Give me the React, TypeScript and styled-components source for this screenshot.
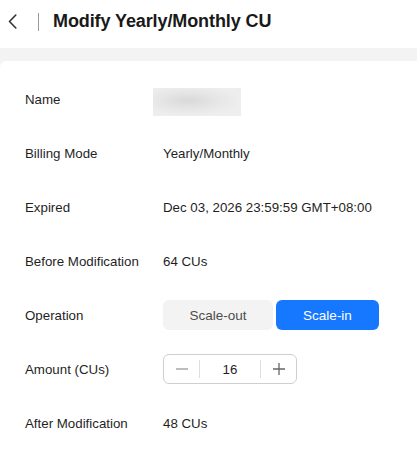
import React from "react";
import styled, { createGlobalStyle } from "styled-components";

const GlobalStyle = createGlobalStyle`
  html, body { margin: 0; padding: 0; }
  body {
    background: #f3f3f3;
    font-family: "Liberation Sans", Arial, sans-serif;
    color: #1f1f1f;
  }
  * { box-sizing: border-box; }
`;

const Page = styled.div`
  min-height: 100vh;
  display: flex;
  flex-direction: column;
  background: #f3f3f3;
`;

const Header = styled.header`
  height: 48px;
  padding: 0 0 6px 7px;
  background: #ffffff;
  display: flex;
  align-items: center;
`;

const BackButton = styled.button`
  width: 10px;
  height: 16px;
  padding: 0;
  border: none;
  background: transparent;
  display: flex;
  align-items: center;
  justify-content: center;
  cursor: pointer;
`;

const Divider = styled.span`
  width: 1px;
  height: 18px;
  background: #9a9a9a;
  margin: 1px 14px 0 21px;
`;

const Title = styled.h1`
  margin: 0;
  font-size: 18px;
  font-weight: 700;
  color: #191919;
  letter-spacing: -0.1px;
`;

const Card = styled.main`
  margin-top: 13px;
  flex: 1;
  background: #ffffff;
  border-radius: 6px 0 0 0;
  padding: 11px 0 0 25px;
  display: flex;
  flex-direction: column;
`;

const Row = styled.div`
  height: 54px;
  display: flex;
  align-items: center;
  font-size: 13.3px;
`;

const Label = styled.div`
  width: 138px;
  flex-shrink: 0;
  color: #1f1f1f;
`;

const Value = styled.div`
  color: #1f1f1f;
`;

const NameMask = styled.div`
  width: 88px;
  height: 28px;
  margin: 6px 0 0 -10px;
  background: radial-gradient(ellipse 60% 55% at 40% 45%, #d9d9d9 0%, #e6e6e6 55%, #eeeeee 100%);
`;

const Segmented = styled.div`
  display: flex;
  gap: 3px;
`;

const SegButton = styled.button<{ $active?: boolean; $w: number }>`
  width: ${(p) => p.$w}px;
  height: 30px;
  border: none;
  border-radius: 6px;
  font-family: inherit;
  font-size: 13.5px;
  padding: 0;
  cursor: pointer;
  background: ${(p) => (p.$active ? "#1677ff" : "#f3f3f3")};
  color: ${(p) => (p.$active ? "#ffffff" : "#4d4d4d")};
`;

const Stepper = styled.div`
  width: 134px;
  height: 30px;
  border: 1px solid #cfcfcf;
  border-radius: 6px;
  display: flex;
  align-items: center;
`;

const StepBtn = styled.button`
  width: 35px;
  height: 100%;
  border: none;
  background: transparent;
  padding: 0;
  display: flex;
  align-items: center;
  justify-content: center;
  cursor: pointer;
`;

const StepSep = styled.span`
  width: 1px;
  height: 18px;
  background: #dedede;
`;

const StepValue = styled.div`
  flex: 1;
  text-align: center;
  font-size: 13.3px;
  color: #1f1f1f;
`;

const rows: { label: string; value?: string }[] = [
  { label: "Billing Mode", value: "Yearly/Monthly" },
  { label: "Expired", value: "Dec 03, 2026 23:59:59 GMT+08:00" },
  { label: "Before Modification", value: "64 CUs" },
];

export default function App() {
  return (
    <Page>
      <GlobalStyle />
      <Header>
        <BackButton aria-label="Back">
          <svg width="9" height="15" viewBox="0 0 9 15" fill="none">
            <path d="M7.8 1 L1.5 7.5 L7.8 14" stroke="#333" strokeWidth="1.6" strokeLinecap="round" strokeLinejoin="round" />
          </svg>
        </BackButton>
        <Divider />
        <Title>Modify Yearly/Monthly CU</Title>
      </Header>
      <Card>
        <Row>
          <Label>Name</Label>
          <NameMask />
        </Row>
        {rows.map((r) => (
          <Row key={r.label}>
            <Label>{r.label}</Label>
            <Value>{r.value}</Value>
          </Row>
        ))}
        <Row>
          <Label>Operation</Label>
          <Segmented>
            <SegButton $w={110}>Scale-out</SegButton>
            <SegButton $w={103} $active>Scale-in</SegButton>
          </Segmented>
        </Row>
        <Row>
          <Label>Amount (CUs)</Label>
          <Stepper>
            <StepBtn aria-label="Decrease">
              <svg width="14" height="14" viewBox="0 0 14 14">
                <path d="M1 7 H13" stroke="#9a9a9a" strokeWidth="1.3" />
              </svg>
            </StepBtn>
            <StepSep />
            <StepValue>16</StepValue>
            <StepSep />
            <StepBtn aria-label="Increase">
              <svg width="14" height="14" viewBox="0 0 14 14">
                <path d="M1 7 H13 M7 1 V13" stroke="#666" strokeWidth="1.3" />
              </svg>
            </StepBtn>
          </Stepper>
        </Row>
        <Row>
          <Label>After Modification</Label>
          <Value>48 CUs</Value>
        </Row>
      </Card>
    </Page>
  );
}
